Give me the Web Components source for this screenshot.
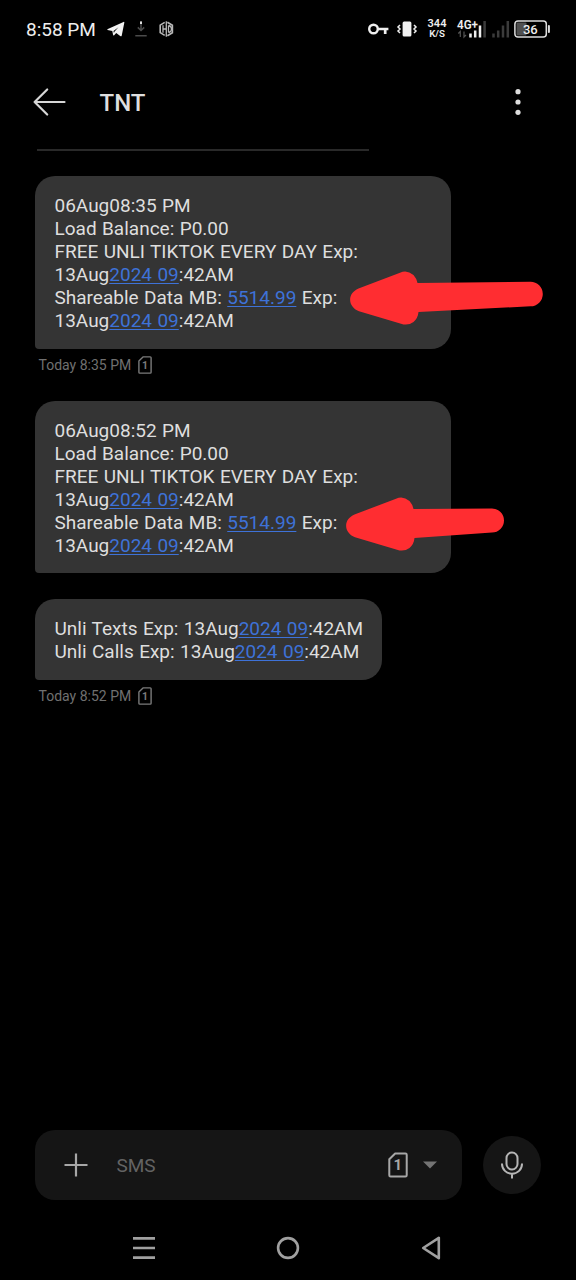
<!DOCTYPE html>
<html lang="en">
<head>
<meta charset="utf-8">
<title>TNT</title>
<style>
html,body{margin:0;background:#000;}
body{width:576px;height:1280px;overflow:hidden;font-family:Roboto,"Liberation Sans",sans-serif;}
</style>
</head>
<body>
<messages-app></messages-app>
<script>
const define = (name, css, html) => customElements.define(name, class extends HTMLElement {
  constructor() {
    super();
    const t = document.createElement('template');
    t.innerHTML = `<style>*{box-sizing:border-box}svg{display:block;flex:none;overflow:visible}${css}</style>${html}`;
    this.attachShadow({mode: 'open'}).appendChild(t.content.cloneNode(true));
  }
});

define('sim-icon', `
  :host{display:block;width:14px;height:18px;color:#7b7b7b}
  svg{width:100%;height:100%}
  text{font:700 10.5px Roboto,sans-serif;fill:currentColor}
`, `<svg viewBox="0 0 14 18"><path d="M5 .9H12.2Q13.1.9 13.1 1.8V16.2Q13.1 17.1 12.2 17.1H1.8Q.9 17.1 .9 16.2V5Z" fill="none" stroke="currentColor" stroke-width="1.4" stroke-linejoin="round"/><text x="6.9" y="12.8" text-anchor="middle">1</text></svg>`);

define('status-bar', `
  :host{display:flex;align-items:center;height:58px;padding:0 25px 0 26px;color:#eee}
  .time{font-size:19px;line-height:24px;width:81px;white-space:nowrap;padding-top:1px}
  .right{display:flex;align-items:center;margin-left:auto}
  .rate{width:22px;margin-left:9px;font-size:11px;font-weight:600;line-height:10px;text-align:center;white-space:nowrap}
  .rate div+div{font-size:9.7px}
  text{font-family:Roboto,sans-serif;fill:#eee}
`, `
  <div class="time">8:58 PM</div>
  <svg width="18" height="16" viewBox="0 0 18 16"><path d="M.3 8.2 16.5.9Q17.5.6 17.3 1.7L14.7 14.7Q14.3 15.8 13.2 15L9.2 12 7.2 14.2Q6.2 14.8 6 13.4L5.3 10 .5 9Z" fill="#f2f2f2"/><path d="M6.500 10 11.500 6.200 7.600 10.500 6.900 12Z" fill="#000"/></svg>
  <svg width="12" height="16" viewBox="0 0 12 16" style="margin-left:10px"><path d="M6 0v9M2.8 6.4 6 9.500l3.2-3.1M.3 14.700h11.4" fill="none" stroke="#4b4b4b" stroke-width="1.5"/><path d="M6 .5V3" stroke="#ddd" stroke-width="2"/></svg>
  <svg width="15" height="16" viewBox="0 0 15 16" style="margin-left:12px"><path d="m5.7 1.4-4.5 2.7v7.5l4.5 2.8M8.400 1.300l5 3v7.400l-5 3" fill="none" stroke="#b8b8b8" stroke-width="1.6"/><path d="M4 4.200v7.600M7.300.3v15.4M4 8h3.300M9.500 4.500v7M9.500 4.500q3 .5 3 3.500t-3 3.500" fill="none" stroke="#b8b8b8" stroke-width="1.3"/></svg>
  <div class="right">
    <svg width="21" height="14" viewBox="0 0 21 14"><circle cx="5.5" cy="7" r="4.3" fill="none" stroke="#eee" stroke-width="2.4"/><path d="M10 7h10.4M17.2 7v5" fill="none" stroke="#eee" stroke-width="2.7"/></svg>
    <svg width="20" height="16" viewBox="0 0 20 16" style="margin-left:8px"><rect x="5.6" y=".5" width="8.8" height="15" rx="1.5" fill="#f1f1f1"/><path d="m3 4-2 2 2 2-2 2 2 2M17 4l2 2-2 2 2 2-2 2" fill="none" stroke="#eee" stroke-width="1.5"/></svg>
    <div class="rate"><div>344</div><div>K/S</div></div>
    <svg width="30" height="20" viewBox="0 0 30 20" style="margin-left:9px"><g stroke-width="2.5" stroke="#eee"><path d="M13.5 18.500v-4M18.200 18.500v-7M23 18.500V6.500"/><path d="M27.600 18.500V2" stroke="#3b3b3b"/></g><path d="M3.300 18v-5.500l-2 2M7 12.500V18l2-2" fill="none" stroke="#555" stroke-width="1.2"/><text x="0" y="10.300" font-size="12" font-weight="600" textLength="21" lengthAdjust="spacingAndGlyphs">4G+</text></svg>
    <svg width="18" height="20" viewBox="0 0 18 20" style="margin-left:5px"><g stroke-width="2.5" stroke="#3b3b3b"><path d="M1.500 18.500v-4M6.200 18.500v-7M11 18.500V6.500M15.800 18.500V2"/></g></svg>
    <svg width="37" height="18" viewBox="0 0 37 18" style="margin-left:4px"><rect x="2.5" y="2.5" width="10" height="13" rx="1" fill="#505050"/><rect x=".9" y=".9" width="31.4" height="16.2" rx="3" fill="none" stroke="#ddd" stroke-width="1.5"/><path d="M34.900 6v6" stroke="#ddd" stroke-width="2" stroke-linecap="round"/><text x="16.300" y="13.600" text-anchor="middle" font-size="13" font-weight="500">36</text></svg>
  </div>`);

define('app-header', `
  :host{display:flex;align-items:center;height:88px;padding:0 53px 0 33px}
  h1{margin:0 auto 0 33.5px;font-size:24px;line-height:30px;font-weight:500;color:#dedede;padding-top:2px}
`, `<svg width="33" height="28" viewBox="0 0 33 28"><path d="M14.2 1.5 1.6 14 14.2 26.5M1.6 14H31.5" fill="none" stroke="#d6d6d6" stroke-width="2.2" stroke-linecap="round" stroke-linejoin="round"/></svg>
  <h1>TNT</h1>
  <svg width="10" height="28" viewBox="0 0 10 28" fill="#dedede"><circle cx="5" cy="3.7" r="2.6"/><circle cx="5" cy="14" r="2.6"/><circle cx="5" cy="24.3" r="2.6"/></svg>`);

define('message-bubble', `
  :host{display:block;position:relative;width:416px;height:172.5px;padding:18px 19px 16px 19.5px;background:#343434;border-radius:20px 20px 20px 4px;color:#dedede;font-size:19px;word-spacing:.7px;line-height:23px;white-space:nowrap}
  :host([compact]){width:347px;height:81px}
`, `<slot></slot>`);

define('message-line', `:host{display:block}`, `<slot></slot>`);
define('text-link', `:host{color:#3e72d8;text-decoration:underline;text-decoration-thickness:1.3px;text-underline-offset:2px;text-decoration-skip-ink:none}`, `<slot></slot>`);

define('message-stamp', `
  :host{display:flex;align-items:center;height:18px;margin:7px 0 0 3.5px;font-size:14px;line-height:18px;color:#707070;white-space:nowrap}
  span{width:92px}
  sim-icon{margin-left:7.5px}
`, `<span><slot></slot></span><sim-icon></sim-icon>`);

define('message-thread', `
  :host{display:flex;flex-direction:column;align-items:flex-start;flex:1;padding:0 35px}
  .rule{width:332px;height:2px;margin:2.5px 0 25.8px 2px;background:#292929}
  .second{margin-top:26.8px}
  .third{margin-top:26px}
  .arrow{position:absolute;z-index:1;fill:#ff2d31}
`, `
  <div class="rule"></div>
  <message-bubble>
    <message-line>06Aug08:35 PM</message-line>
    <message-line>Load Balance: P0.00</message-line>
    <message-line>FREE UNLI TIKTOK EVERY DAY Exp:</message-line>
    <message-line>13Aug<text-link>2024 09</text-link>:42AM</message-line>
    <message-line>Shareable Data MB: <text-link>5514.99</text-link> Exp:</message-line>
    <message-line>13Aug<text-link>2024 09</text-link>:42AM</message-line>
    <svg class="arrow" style="left:314.500px;top:95px" width="193" height="54" viewBox="0 0 193 54"><path d="M8.500 17.500 50 1.700Q57-1.700 63.500 4 67 8 67.500 12L180.500 10.700A12.300 12.300 0 0 1 180.500 35.300L68.500 41Q68 47 63.500 51 58 55 51 52.700L9 40.300C-2.500 35.500-3 22.500 8.500 17.500Z"/></svg>
  </message-bubble>
  <message-stamp>Today 8:35 PM</message-stamp>
  <message-bubble class="second">
    <message-line>06Aug08:52 PM</message-line>
    <message-line>Load Balance: P0.00</message-line>
    <message-line>FREE UNLI TIKTOK EVERY DAY Exp:</message-line>
    <message-line>13Aug<text-link>2024 09</text-link>:42AM</message-line>
    <message-line>Shareable Data MB: <text-link>5514.99</text-link> Exp:</message-line>
    <message-line>13Aug<text-link>2024 09</text-link>:42AM</message-line>
    <svg class="arrow" style="left:311px;top:96.400px" width="158" height="54" viewBox="0 0 158 54"><path d="M8.500 17.500 50 1.700Q57-1.700 63.500 4 67 8 67.500 12L146 11.500A12 12 0 0 1 146 35.500L68.500 41Q68 47 63.500 51 58 55 51 52.700L9 40.300C-2.500 35.500-3 22.500 8.500 17.500Z"/></svg>
  </message-bubble>
  <message-bubble class="third" compact>
    <message-line>Unli Texts Exp: 13Aug<text-link>2024 09</text-link>:42AM</message-line>
    <message-line>Unli Calls Exp: 13Aug<text-link>2024 09</text-link>:42AM</message-line>
  </message-bubble>
  <message-stamp>Today 8:52 PM</message-stamp>`);

define('message-composer', `
  :host{display:flex;align-items:center;height:70px;padding:0 35px;gap:21px}
  .field{display:flex;align-items:center;width:427px;height:70px;padding:0 25px 0 29px;border-radius:20px;background:#151515}
  .hint{margin-left:28.5px;margin-right:auto;font-size:19px;line-height:24px;color:#636363;padding-top:2px}
  sim-icon{width:20px;height:26px;color:#a7a7a7}
  .caret{margin-left:15px}
  .mic{display:flex;align-items:center;justify-content:center;width:58px;height:58px;border-radius:50%;background:#151515}
`, `<div class="field">
    <svg width="24" height="24"><path d="M12 .5v23M.5 12h23" stroke="#a7a7a7" stroke-width="2.2"/></svg>
    <div class="hint">SMS</div>
    <sim-icon></sim-icon>
    <svg class="caret" width="14" height="8"><path d="M0 .5h14L7 7.500Z" fill="#747474"/></svg>
  </div>
  <div class="mic"><svg width="22" height="28" viewBox="0 0 22 28"><g fill="none" stroke="#b5b5b5" stroke-width="2"><rect x="5.500" y="1.500" width="11" height="17" rx="5.500"/><path d="M1 12.500v.5A10 9.700 0 0 0 21 13v-.5M11 22.500V27.500"/></g></svg></div>`);

define('navigation-bar', `
  :host{display:flex;align-items:center;justify-content:space-between;height:80px;padding:16px 135px 0 133px}
`, `<svg width="22" height="24"><path d="M0 2.300h22M0 12h22M0 21.700h22" stroke="#a0a0a0" stroke-width="2.700"/></svg>
  <svg width="24" height="24"><circle cx="12" cy="12" r="9.900" fill="none" stroke="#a0a0a0" stroke-width="2.600"/></svg>
  <svg width="20" height="24"><path d="M2.200 12 17.800 1.800V22.200Z" fill="none" stroke="#a0a0a0" stroke-width="2.600" stroke-linejoin="round"/></svg>`);

define('messages-app', `
  :host{display:flex;flex-direction:column;width:576px;height:1280px;background:#000;overflow:hidden}
`, `<status-bar></status-bar><app-header></app-header><message-thread></message-thread><message-composer></message-composer><navigation-bar></navigation-bar>`);
</script>
</body>
</html>
